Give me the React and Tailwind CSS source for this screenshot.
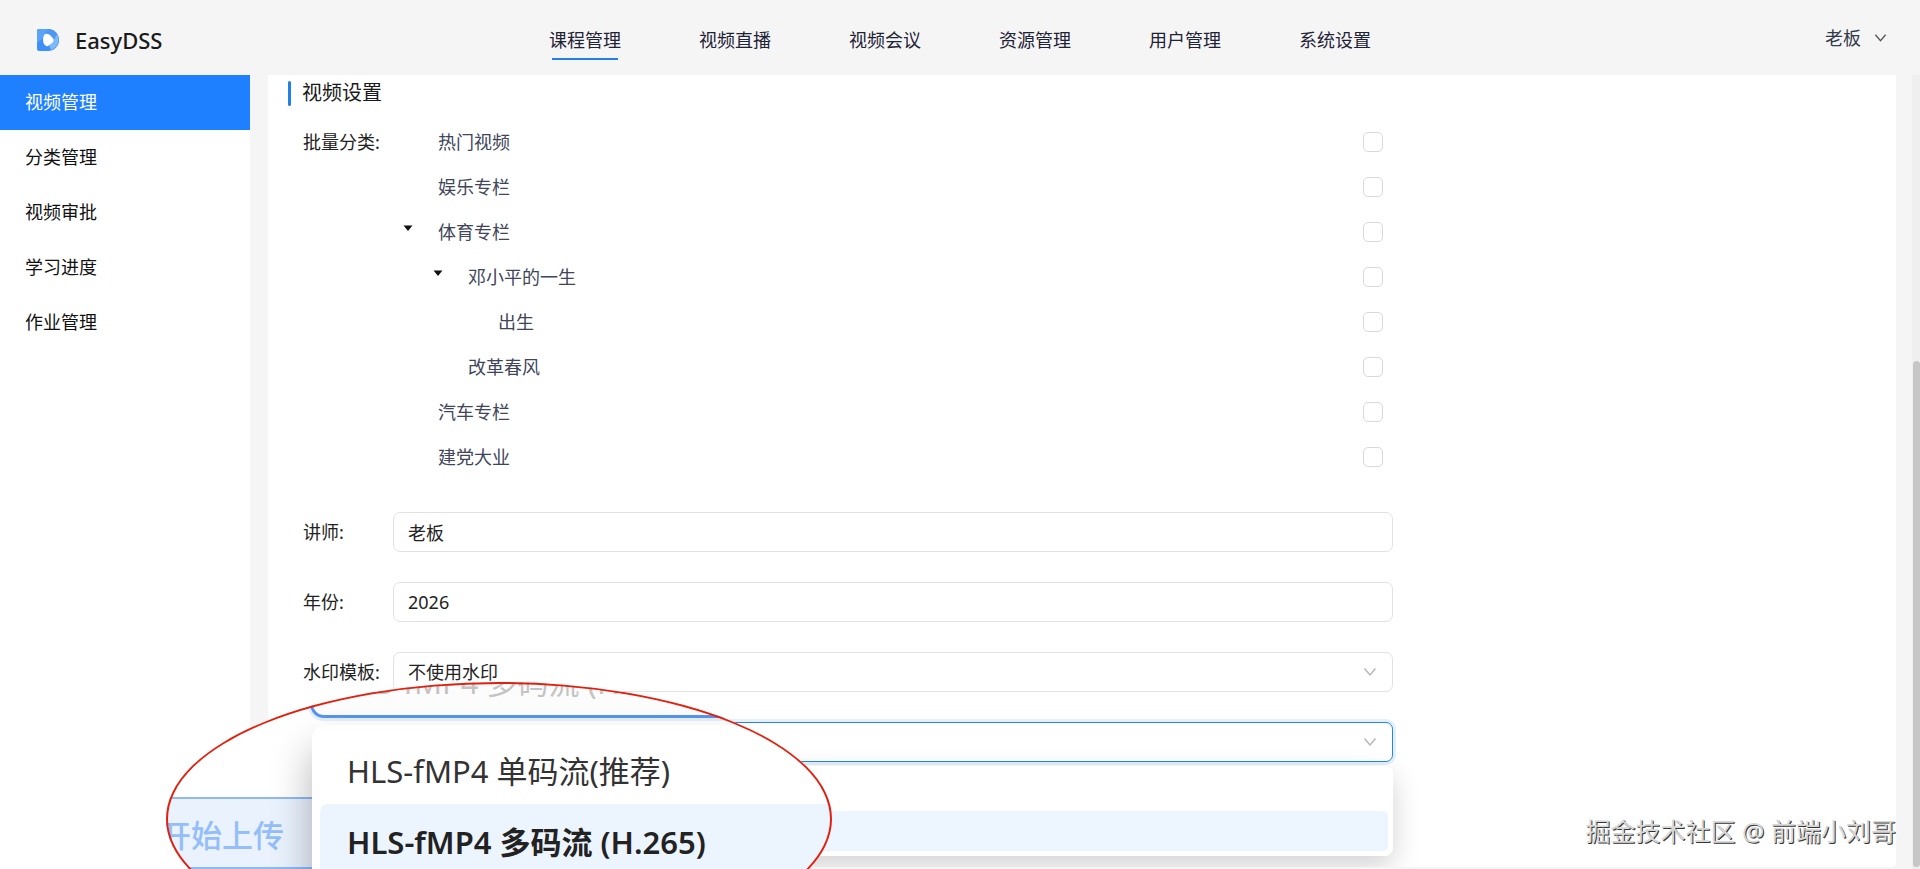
import React from "react";

const navItems = ["课程管理", "视频直播", "视频会议", "资源管理", "用户管理", "系统设置"];
const sideItems = ["视频管理", "分类管理", "视频审批", "学习进度", "作业管理"];

const categories = [
    { name: "热门视频", pad: "pl-[45px]" },
    { name: "娱乐专栏", pad: "pl-[45px]" },
    { name: "体育专栏", pad: "pl-[10px]", open: true },
    { name: "邓小平的一生", pad: "pl-[40px]", open: true },
    { name: "出生", pad: "pl-[105px]" },
    { name: "改革春风", pad: "pl-[75px]" },
    { name: "汽车专栏", pad: "pl-[45px]" },
    { name: "建党大业", pad: "pl-[45px]" },
];

const Chevron = ({ className }) => (
    <svg viewBox="0 0 14 10" fill="none" stroke="currentColor" strokeWidth="1.4" className={className}>
        <path d="M1.5 1.5 7 8 12.5 1.5" />
    </svg>
);

const Logo = () => (
    <svg viewBox="0 0 22 22" className="h-[22px] w-[22px]">
        <path d="M2 0H11A11 11 0 0 1 11 22H2Q0 22 0 20V2Q0 0 2 0Z" fill="#3d8ffb" />
        <path d="M2 0H11L5 10 0 14V2Q0 0 2 0Z" fill="#5ba3fa" />
        <path d="M11 0A11 11 0 0 1 20 17L15 11 9 4Z" fill="#4f97f2" />
        <path d="M20 5A11 11 0 0 1 14 21L12 16 17 11Z" fill="#7db9fb" />
        <path d="M8 5Q11 4 14 7L16.500 10Q17.500 12 15 14L11 17Q8 18 6.500 14Q5 8 8 5Z" fill="#fff" />
    </svg>
);

const Header = () => (
    <header className="flex h-[75px] items-center bg-[#f5f5f5]">
        <div className="flex w-[510px] items-center gap-4 pt-[5px] pl-[37px]">
            <Logo />
            <h1 className="text-[22px] leading-[30px] font-medium text-[#1a1a1a]">EasyDSS</h1>
        </div>
        <nav className="flex flex-1 pt-[10px]">
            {navItems.map((item, i) => (
                <a key={item} href="#" className="flex w-[150px] flex-col items-center text-[#1e2235]">
                    <span className="leading-[30px]">{item}</span>
                    <span className={i === 0 ? "mt-[3px] h-[2px] w-[66px] bg-[#2080e8]" : "mt-[3px] h-[2px]"} />
                </a>
            ))}
        </nav>
        <button className="mr-[33px] flex items-center gap-[13px] text-[#333a4a]">
            老板
            <Chevron className="h-[10px] w-[13px] text-[#555]" />
        </button>
    </header>
);

const Sidebar = () => (
    <aside className="w-[250px] shrink-0 bg-white">
        {sideItems.map((item, i) => (
            <a
                key={item}
                href="#"
                className={
                    i === 0
                        ? "flex h-[55px] items-center bg-[#1f80ff] pb-[2px] pl-[25px] text-white"
                        : "flex h-[55px] items-center pb-[2px] pl-[25px] text-[#111]"
                }
            >
                {item}
            </a>
        ))}
    </aside>
);

const CategoryTree = () => (
    <div className="flex">
        <span className="w-[90px] shrink-0 leading-[47px] whitespace-nowrap">批量分类:</span>
        <ul className="flex-1 text-[#40455a]">
            {categories.map((c, i) => (
                <li key={c.name} className={`flex h-[45px] items-center pr-[10px] ${c.pad}`}>
                    {c.open && (
                        <button type="button" aria-label="收起" className="mr-[25px] flex w-[10px] pb-2">
                            <svg viewBox="0 0 10 6" className="h-[6px] w-[10px]">
                                <path d="M0.500 0.500H9.500L5 6Z" fill="#111" />
                            </svg>
                        </button>
                    )}
                    <label htmlFor={`cat-${i}`} className="flex-1">{c.name}</label>
                    <input
                        id={`cat-${i}`}
                        type="checkbox"
                        className="h-5 w-5 appearance-none rounded-[5px] border border-[#d9d9d9] bg-white"
                    />
                </li>
            ))}
        </ul>
    </div>
);

const Field = ({ id, label, children }) => (
    <div className="flex h-10 items-center">
        <label htmlFor={id} className="w-[90px] shrink-0 whitespace-nowrap">{label}</label>
        <div className="relative flex-1">{children}</div>
    </div>
);

const inputClass = "h-10 w-full appearance-none rounded-[7px] border border-[#e2e2e2] bg-white px-[14px] outline-none";

// enlarged view of the open dropdown, clipped to an ellipse
const Magnifier = () => (
    <div className="absolute top-[682px] left-[166px] h-[274px] w-[666px]">
        <div className="relative h-full w-full overflow-hidden rounded-[50%] bg-white">
            <div className="absolute top-[115px] left-[-40px] h-[72px] w-[240px] border-2 border-[#8db9f7] bg-[#eaf2fe] pl-[32px] text-[31px] leading-[72px] font-medium text-[#94befa]">
                开始上传
            </div>
            <div className="absolute top-[-36px] left-[144px] h-[72px] w-[700px] rounded-[14px] border-[3px] border-[#5595ee] bg-[#fcfcfc] pl-[24px] text-[31px] leading-[66px] whitespace-nowrap text-[#c4c4c4] shadow-[0_0_0_3px_#e3effd]">
                HLS-fMP4 多码流 (H.265)
            </div>
            <ul className="absolute top-[43px] left-[146px] h-[260px] w-[700px] rounded-[14px] bg-white p-[8px] text-[31px] whitespace-nowrap text-[#333] shadow-[0_24px_40px_rgba(0,0,0,0.3)]">
                <li className="h-[71px] pl-[27px] leading-[76px]">HLS-fMP4 单码流(推荐)</li>
                <li className="h-[71px] rounded-[8px] bg-[#ecf4fe] pl-[27px] leading-[76px] font-semibold text-[#222]">
                    HLS-fMP4 多码流 (H.265)
                </li>
            </ul>
        </div>
        <div className="absolute inset-0 rounded-[50%] border-2 border-[#e3200f]" />
    </div>
);

export default function App() {
    return (
        <div className="relative flex h-screen flex-col overflow-hidden bg-[#f5f5f5] font-['Noto_Sans','Noto_Sans_CJK_SC',sans-serif] text-[18px] leading-[28px] text-[#222]">
            <Header />
            <div className="flex min-h-0 flex-1">
                <Sidebar />
                <main className="mb-[2px] ml-[18px] min-w-0 flex-1 overflow-hidden rounded-b-[4px] bg-white pt-[5px] pl-[20px]">
                    <div className="flex items-center gap-[11px]">
                        <span className="h-[25px] w-[3px] rounded-sm bg-[#2080e8]" />
                        <h2 className="text-[20px] leading-[26px] text-[#1a1a1a]">视频设置</h2>
                    </div>
                    <form className="mt-[13px] ml-[15px] max-w-[1090px]">
                        <CategoryTree />
                        <div className="mt-[33px] flex flex-col gap-[30px]">
                            <Field id="teacher" label="讲师:">
                                <input id="teacher" defaultValue="老板" className={inputClass} />
                            </Field>
                            <Field id="year" label="年份:">
                                <input id="year" defaultValue="2026" className={inputClass} />
                            </Field>
                            <Field id="watermark" label="水印模板:">
                                <select id="watermark" className={inputClass}>
                                    <option>不使用水印</option>
                                </select>
                                <Chevron className="pointer-events-none absolute top-[15px] right-4 h-[10px] w-[14px] text-[#b5b5b5]" />
                            </Field>
                            <Field id="stream" label="">
                                <select
                                    id="stream"
                                    aria-label="码流"
                                    className="h-10 w-full appearance-none rounded-[7px] border border-[#2585e0] bg-white px-[14px] text-[#bbb] shadow-[0_0_0_3px_#e3f1fd] outline-none"
                                />
                                <Chevron className="pointer-events-none absolute top-[15px] right-4 h-[10px] w-[14px] text-[#b5b5b5]" />
                                <div className="absolute top-[44px] left-0 w-full rounded-[8px] bg-white p-[5px] shadow-[0_10px_28px_rgba(0,0,0,0.18)]">
                                    <div className="h-10" />
                                    <div className="h-10 rounded-[5px] bg-[#edf5ff]" />
                                </div>
                            </Field>
                        </div>
                    </form>
                </main>
                <div className="ml-[16px] w-2 bg-[#efefef] pt-[286px] pb-[2px]">
                    <div className="ml-px h-full rounded-full bg-[#c6c6c6]" />
                </div>
            </div>
            <Magnifier />
            <p className="absolute right-[24px] bottom-[20px] text-[25px] leading-[36px] text-[#d8d8d8] [text-shadow:1px_1px_0_#333]">
                掘金技术社区 @ 前端小刘哥
            </p>
        </div>
    );
}
